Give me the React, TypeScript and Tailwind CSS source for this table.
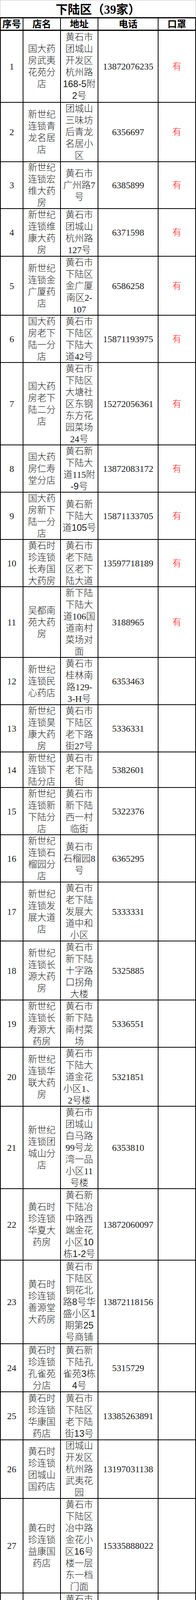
import React from "react";

type Row = {
  n: number;
  name: string[];
  addr: string[];
  phone: string;
  mask?: boolean;
  h: string;
  small?: boolean;
};

const rows: Row[] = [
  { n: 1, h: "h-[184px]", name: ["国大药", "房武夷", "花苑分", "店"], addr: ["黄石市", "团城山", "开发区", "杭州路", "{168-5}附", "{2}号"], phone: "13872076235", mask: true },
  { n: 2, h: "h-[152px]", name: ["新世纪", "连锁青", "龙名居", "店"], addr: ["团城山", "三味坊", "后青龙", "名居小", "区"], phone: "6356697", mask: true },
  { n: 3, h: "h-[120px]", name: ["新世纪", "连锁宏", "维大药", "房"], addr: ["黄石市", "广州路7", "号"], phone: "6385899", mask: true },
  { n: 4, h: "h-[122px]", name: ["新世纪", "连锁维", "康大药", "房"], addr: ["黄石市", "团城山", "杭州路", "127号"], phone: "6371598", mask: true },
  { n: 5, h: "h-[151px]", name: ["新世纪", "连锁金", "广厦药", "店"], addr: ["黄石市", "下陆区", "金广厦", "南区2-", "107"], phone: "6586258", mask: true },
  { n: 6, h: "h-[121px]", name: ["国大药", "房老下", "陆一分", "店"], addr: ["黄石市", "下陆区", "下陆大", "道42号"], phone: "15871193975", mask: true },
  { n: 7, h: "h-[211px]", name: ["国大药", "房老下", "陆二分", "店"], addr: ["黄石市", "下陆区", "大塘社", "区东钢", "东方花", "园菜场", "24号"], phone: "15272056361", mask: true },
  { n: 8, h: "h-[121px]", name: ["国大药", "房仁寿", "堂分店"], addr: ["黄石新", "下陆大", "道115附", "{-9}号"], phone: "13872083172", mask: true },
  { n: 9, h: "h-[121px]", name: ["国大药", "房新下", "陆一分", "店"], addr: ["黄石新", "下陆大", "道{105}号"], phone: "15871133705", mask: true },
  { n: 10, h: "h-[121px]", name: ["黄石时", "珍连锁", "长寿国", "大药房"], addr: ["黄石市", "老下陆", "区老下", "陆大道"], phone: "13597718189", mask: true },
  { n: 11, h: "h-[181px]", name: ["吴都南", "苑大药", "房"], addr: ["新下陆", "下陆大", "道106国", "道南村", "菜场对", "面"], phone: "3188965", mask: true },
  { n: 12, h: "h-[121px]", name: ["新世纪", "连锁民", "心药店"], addr: ["黄石市", "桂林南", "路129-", "3-H号"], phone: "6353463" },
  { n: 13, h: "h-[121px]", name: ["新世纪", "连锁昊", "康大药", "房"], addr: ["黄石市", "下陆区", "老下路", "街27号"], phone: "5336331" },
  { n: 14, h: "h-[91px]", name: ["新世纪", "连锁下", "陆分店"], addr: ["黄石市", "老下陆", "街"], phone: "5382601" },
  { n: 15, h: "h-[121px]", name: ["新世纪", "连锁新", "下陆分", "店"], addr: ["黄石市", "新下陆", "西一村", "临街"], phone: "5322376" },
  { n: 16, h: "h-[121px]", name: ["新世纪", "连锁石", "榴园分", "店"], addr: ["黄石市", "石榴园8", "号"], phone: "6365295" },
  { n: 17, h: "h-[151px]", name: ["新世纪", "连锁发", "展大道", "店"], addr: ["黄石市", "老下陆", "发展大", "道中和", "小区"], phone: "5333331" },
  { n: 18, h: "h-[151px]", name: ["新世纪", "连锁长", "源大药", "房"], addr: ["黄石市", "新下陆", "十字路", "口拐角", "大楼"], phone: "5325885" },
  { n: 19, h: "h-[121px]", name: ["新世纪", "连锁长", "寿源大", "药房"], addr: ["黄石市", "新下陆", "南村菜", "场"], phone: "5336551" },
  { n: 20, h: "h-[151px]", name: ["新世纪", "连锁华", "联大药", "房"], addr: ["黄石市", "下陆大", "道金花", "小区1、", "2号楼"], phone: "5321851" },
  { n: 21, h: "h-[211px]", name: ["新世纪", "连锁团", "城山分", "店"], addr: ["黄石市", "团城山", "白马路", "99号龙", "湾一品", "小区11", "号楼"], phone: "6353810" },
  { n: 22, h: "h-[183px]", name: ["黄石时", "珍连锁", "华夏大", "药房"], addr: ["黄石新", "下陆冶", "中路西", "端金花", "小区{10}", "栋{1-2}号"], phone: "13872060097" },
  { n: 23, h: "h-[214px]", name: ["黄石时", "珍连锁", "善源堂", "大药房"], addr: ["黄石市", "下陆区", "铜花北", "路{8}号华", "盛小区{1}", "期第{25}", "号商铺"], phone: "13872118156" },
  { n: 24, h: "h-[123px]", name: ["黄石时", "珍连锁", "孔雀苑", "分店"], addr: ["黄石新", "下陆孔", "雀苑{3}栋", "{4}号"], phone: "5315729" },
  { n: 25, h: "h-[123px]", name: ["黄石时", "珍连锁", "华康国", "药店"], addr: ["黄石市", "下陆区", "老下陆", "街{13}号"], phone: "13385263891" },
  { n: 26, h: "h-[150px]", name: ["黄石时", "珍连锁", "团城山", "国药店"], addr: ["团城山", "开发区", "杭州路", "武夷花", "园"], phone: "13197031138" },
  { n: 27, h: "h-[242px]", name: ["黄石时", "珍连锁", "益康国", "药店"], addr: ["黄石市", "下陆区", "冶中路", "金花小", "区{16}号", "楼一层", "东一档", "门面"], phone: "15335888022" },
  { n: 28, h: "h-[301px]", name: ["吴都福", "瑞得大", "药房"], addr: ["黄石市", "杭州西", "路团城", "山国绣", "园", "9—1—3", "号（教", "委公交", "车站", "旁）"], phone: "6350211" },
  { n: 29, h: "h-[241px]", name: ["吴都百", "姓缘大", "药房"], addr: ["下陆区", "新下陆", "下陆大", "道39—1", "号（区", "政府旁", "金港量", "贩1楼）"], phone: "5316757" },
  { n: 30, h: "h-[211px]", name: ["吴都世", "嘉康大", "药房"], addr: ["下陆区", "新下陆", "大道172", "号（老", "金港超", "市一", "楼）"], phone: "5332729" },
  { n: 31, h: "h-[121px]", name: ["新世纪", "连锁铜", "花北路", "店"], addr: ["黄石市", "下陆区", "铜花北", "路"], phone: "13828440617" },
  { n: 32, h: "h-[121px]", small: true, name: ["新世纪", "连锁民", "泰大药", "房"], addr: ["黄石市团", "城山香竹", "苑小区2", "号楼"], phone: "13597670081" },
  { n: 33, h: "h-[121px]", small: true, name: ["新世纪", "连锁御", "医堂药", "店"], addr: ["团城山育", "才路8号"], phone: "15997116826" },
  { n: 34, h: "h-[91px]", small: true, name: ["新世纪", "连锁祥", "福药店"], addr: ["下陆区新", "下陆232", "号"], phone: "5332818" },
  { n: 35, h: "h-[121px]", small: true, name: ["新世纪", "连锁晨", "光大药", "房"], addr: ["黄石市新", "下陆大道", "210号"], phone: "13886473986" },
  { n: 36, h: "h-[121px]", small: true, name: ["新世纪", "连锁医", "药汇大", "药房"], addr: ["黄石市下", "陆区杭州", "西路159-", "附11号"], phone: "18062298345" },
  { n: 37, h: "h-[141px]", small: true, name: ["新世纪", "连锁华", "草堂药", "房"], addr: ["黄石市下", "陆区新下", "陆冶金中", "路金花四", "期6-8号"], phone: "15997138859" },
  { n: 38, h: "h-[121px]", small: true, name: ["新世纪", "连锁百", "姓大药", "店"], addr: ["黄石市下", "陆区东钢", "东方花园", "99I-13号"], phone: "13971789425" },
  { n: 39, h: "h-[90px]", name: ["平民百", "姓天益", "药店"], addr: ["杭州西", "路159栋", "4号"], phone: "13597701594" },
];

function Seg({ text }: { text: string }) {
  const parts = text.split(/(\{[^}]*\})/);
  return (
    <>
      {parts.map((p, i) =>
        p.startsWith("{") ? (
          <span key={i} className="font-['Liberation_Sans','Noto_Sans_CJK_SC',sans-serif] font-normal">
            {p.slice(1, -1)}
          </span>
        ) : (
          <span key={i}>{p}</span>
        )
      )}
    </>
  );
}

function Lines({ lines, small }: { lines: string[]; small?: boolean }) {
  return (
    <div className={small ? "text-[22px] leading-[28px] font-light" : "text-[23.5px] leading-[30px] font-light"}>
      {lines.map((l, i) => (
        <div key={i} className="whitespace-nowrap text-center">
          <Seg text={l} />
        </div>
      ))}
    </div>
  );
}

function Cell({ w, children }: { w: string; children?: React.ReactNode }) {
  return (
    <div className={`${w} h-full shrink-0 flex items-center justify-center overflow-hidden text-center border-r-2 border-black`}>
      {children}
    </div>
  );
}

export default function App() {
  return (
    <div className="w-[502px] bg-white text-[#1c1c1c] font-['Liberation_Serif','Noto_Sans_CJK_SC',serif]">
      <div className="h-[44px] w-[502px] border-t border-l border-r border-[#c4c4c4] flex items-center justify-center">
        <span className="text-[31px] font-bold leading-none text-black pt-[4px]">下陆区（39家）</span>
      </div>
      <div className="w-[502px] border-l-2 border-black">
        <div className="flex h-[35px] border-t-[3px] border-b-[3px] border-black text-[24px] font-bold text-black leading-none">
          <Cell w="w-[58px]">序号</Cell>
          <Cell w="w-[96px]">店名</Cell>
          <Cell w="w-[96px]">地址</Cell>
          <Cell w="w-[154px]">电话</Cell>
          <Cell w="w-[96px]">口罩</Cell>
        </div>
        {rows.map((r) => (
          <div key={r.n} className={`flex ${r.h} border-b-2 border-black`}>
            <Cell w="w-[58px]">
              <span className="text-[23.5px] leading-[30px]">{r.n}</span>
            </Cell>
            <Cell w="w-[96px]">
              <Lines lines={r.name} />
            </Cell>
            <Cell w="w-[96px]">
              <Lines lines={r.addr} small={r.small} />
            </Cell>
            <Cell w="w-[154px]">
              <span className="text-[23.5px] leading-[30px]">{r.phone}</span>
            </Cell>
            <Cell w="w-[96px]">
              {r.mask ? <span className="text-[23.5px] leading-[30px] font-light text-[#ff1a1a]">有</span> : null}
            </Cell>
          </div>
        ))}
      </div>
    </div>
  );
}
